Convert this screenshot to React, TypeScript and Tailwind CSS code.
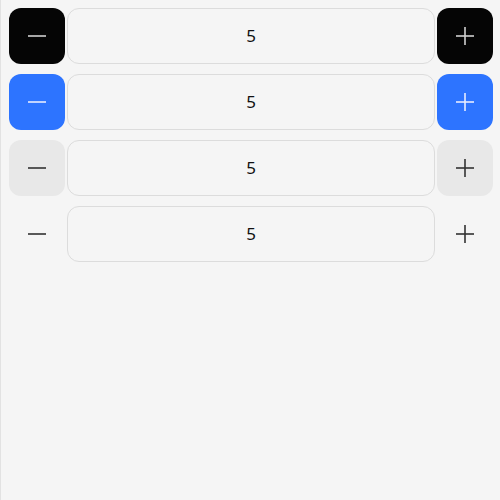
import React from "react";

const Minus = ({ c }: { c: string }) => (
  <svg width="18" height="18" viewBox="0 0 18 18" fill="none">
    <line x1="0" y1="9" x2="18" y2="9" stroke={c} strokeWidth="1.6" />
  </svg>
);
const Plus = ({ c }: { c: string }) => (
  <svg width="18" height="18" viewBox="0 0 18 18" fill="none">
    <line x1="0" y1="9" x2="18" y2="9" stroke={c} strokeWidth="1.6" />
    <line x1="9" y1="0" x2="9" y2="18" stroke={c} strokeWidth="1.6" />
  </svg>
);

const rows = [
  { btn: "bg-[#050505]", icon: "#d0d0d0" },
  { btn: "bg-[#2d74ff]", icon: "#e6ecff" },
  { btn: "bg-[#e8e8e8]", icon: "#333333" },
  { btn: "bg-transparent", icon: "#333333" },
];

export default function App() {
  return (
    <div
      className="w-[500px] h-[500px] bg-[#f5f5f5] border-l border-[#e2e2e2] pl-2 pr-[7px] pt-2 flex flex-col gap-[10px]"
      style={{ fontFamily: '"Noto Sans", "DejaVu Sans", sans-serif' }}
    >
      {rows.map((r, i) => (
        <div key={i} className="flex gap-[2px] h-14">
          <button className={`w-14 h-14 rounded-xl flex items-center justify-center ${r.btn}`}>
            <Minus c={r.icon} />
          </button>
          <div className="flex-1 h-14 rounded-xl border border-[#dcdcdc] bg-[#f5f5f5] flex items-center justify-center text-[17px] text-[#111]">
            5
          </div>
          <button className={`w-14 h-14 rounded-xl flex items-center justify-center ${r.btn}`}>
            <Plus c={r.icon} />
          </button>
        </div>
      ))}
    </div>
  );
}
